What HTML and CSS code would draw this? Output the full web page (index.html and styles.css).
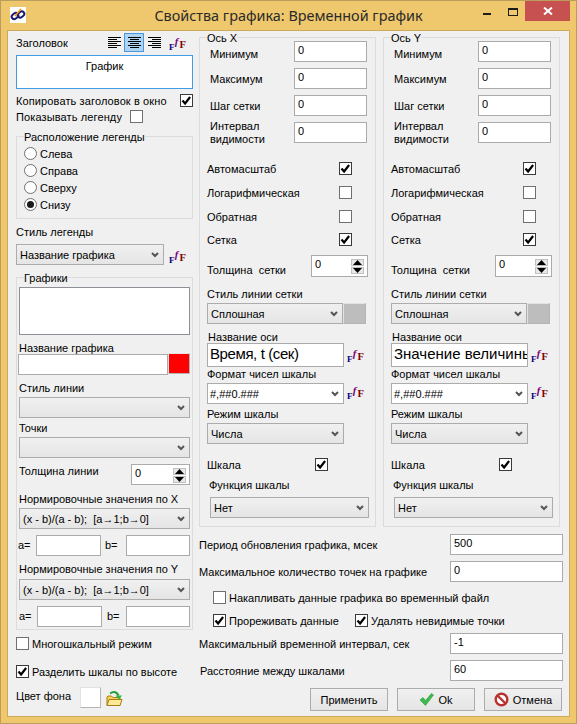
FILE: index.html
```html
<!DOCTYPE html>
<html lang="ru">
<head>
    <meta charset="UTF-8" />
    <title>Свойства графика</title>
    <link rel="stylesheet" href="styles.css">
</head>
<body>
<svg class="defs" width="0" height="0">
    <symbol id="chev" viewBox="0 0 8 6"><path d="M1 1l3 3 3-3" fill="none" stroke="#555" stroke-width="2"/></symbol>
    <symbol id="tick" viewBox="0 0 13 13"><path d="M2.5 6.5l2.6 3 5-6.5" fill="none" stroke="#000" stroke-width="2.2"/></symbol>
    <symbol id="up" viewBox="0 0 9 5"><path d="M4.5 0L9 5H0z" fill="#000"/></symbol>
    <symbol id="down" viewBox="0 0 9 5"><path d="M0 0h9L4.5 5z" fill="#000"/></symbol>
</svg>

<div class="window">
    <div class="titlebar">
        <div class="app-icon">
            <svg width="16" height="16" viewBox="0 0 16 16">
                <rect width="16" height="16" fill="#fff"/>
                <g fill="none" stroke="#1c1c6e" stroke-width="2">
                    <rect x="1.5" y="6.5" width="7" height="5" rx="2.5" transform="rotate(-40 5 9)"/>
                    <rect x="7.5" y="5" width="7" height="5" rx="2.5" transform="rotate(-40 11 7.5)"/>
                </g>
                <path d="M5 9l6-7" stroke="#f09a1a" stroke-width="1.6"/>
            </svg>
        </div>
        <div class="title">Свойства графика: Временной график</div>
        <div class="controls">
            <div class="ctl-min"></div>
            <div class="ctl-max"></div>
            <div class="ctl-close">
                <svg width="10" height="8" viewBox="0 0 10 8"><path d="M1 0.5l8 7M9 0.5l-8 7" stroke="#fff" stroke-width="2"/></svg>
            </div>
        </div>
    </div>

    <div class="client">
        <div class="left">
            <div class="head-row mt2">
                <span class="lbl">Заголовок</span>
                <div class="align-bar">
                    <div class="align-btn">
                        <svg width="13" height="11" viewBox="0 0 13 11"><path d="M0 .5h13M0 2.5h9M0 4.5h13M0 6.5h9M0 8.5h13M0 10.5h9" stroke="#000"/></svg>
                    </div>
                    <div class="align-btn on">
                        <svg width="13" height="11" viewBox="0 0 13 11"><path d="M0 .5h13M2 2.5h9M0 4.5h13M2 6.5h9M0 8.5h13M2 10.5h9" stroke="#000"/></svg>
                    </div>
                    <div class="align-btn">
                        <svg width="13" height="11" viewBox="0 0 13 11"><path d="M0 .5h13M4 2.5h9M0 4.5h13M4 6.5h9M0 8.5h13M4 10.5h9" stroke="#000"/></svg>
                    </div>
                    <span class="ff ml4"><b class="ff-a">F</b><i class="ff-b">f</i><b class="ff-c">F</b></span>
                </div>
            </div>
            <div class="caption-box mt3">График</div>

            <div class="check-row mt5 w177">
                <span class="lbl wide">Копировать заголовок в окно</span>
                <span class="cb on"><svg width="13" height="13"><use href="#tick"/></svg></span>
            </div>
            <div class="check-row mt3 w127">
                <span class="lbl wide">Показывать легенду</span>
                <span class="cb"></span>
            </div>

            <div class="group mt13 legend-pos">
                <div class="group-title">Расположение легенды</div>
                <div class="radio-row first"><span class="radio"></span><span class="lbl">Слева</span></div>
                <div class="radio-row"><span class="radio"></span><span class="lbl">Справа</span></div>
                <div class="radio-row"><span class="radio"></span><span class="lbl">Сверху</span></div>
                <div class="radio-row"><span class="radio on"></span><span class="lbl">Снизу</span></div>
            </div>

            <div class="lbl mt6">Стиль легенды</div>
            <div class="field-row mt5">
                <div class="select w148">Название графика<svg class="chev" width="8" height="6"><use href="#chev"/></svg></div>
                <span class="ff ml4 ff-low"><b class="ff-a">F</b><i class="ff-b">f</i><b class="ff-c">F</b></span>
            </div>

            <div class="group mt12 plots">
                <div class="group-title">Графики</div>
                <div class="listbox"></div>
                <div class="lbl mt6">Название графика</div>
                <div class="field-row name-row">
                    <div class="input name-input"></div>
                    <div class="swatch red"></div>
                </div>
                <div class="lbl mt6">Стиль линии</div>
                <div class="select mt2 w171"><svg class="chev" width="8" height="6"><use href="#chev"/></svg></div>
                <div class="lbl mt3">Точки</div>
                <div class="select mt2 w171"><svg class="chev" width="8" height="6"><use href="#chev"/></svg></div>
                <div class="value-row mt6 between">
                    <span class="lbl low">Толщина линии</span>
                    <div class="spin w59"><span>0</span>
                        <div class="spin-btns">
                            <span class="spin-btn"><svg width="9" height="5"><use href="#up"/></svg></span>
                            <span class="spin-btn"><svg width="9" height="5"><use href="#down"/></svg></span>
                        </div>
                    </div>
                </div>
                <div class="lbl mt7">Нормировочные значения по X</div>
                <div class="select mt2 w171">(x - b)/(a - b);&nbsp; [a→1;b→0]<svg class="chev" width="8" height="6"><use href="#chev"/></svg></div>
                <div class="value-row mt6 pair-x">
                    <span class="lbl a">a=</span>
                    <div class="input wa"></div>
                    <span class="lbl b">b=</span>
                    <div class="input wb"></div>
                </div>
                <div class="lbl mt6">Нормировочные значения по Y</div>
                <div class="select mt3 w171">(x - b)/(a - b);&nbsp; [a→1;b→0]<svg class="chev" width="8" height="6"><use href="#chev"/></svg></div>
                <div class="value-row mt6 pair-y">
                    <span class="lbl a">a=</span>
                    <div class="input wa"></div>
                    <span class="lbl b">b=</span>
                    <div class="input wb"></div>
                </div>
            </div>

            <div class="inline-check mt7"><span class="cb"></span><span class="lbl">Многошкальный режим</span></div>
            <div class="inline-check mt15"><span class="cb on"><svg width="13" height="13"><use href="#tick"/></svg></span><span class="lbl">Разделить шкалы по высоте</span></div>

            <div class="bg-row mt9">
                <span class="lbl bg-lbl">Цвет фона</span>
                <div class="swatch white"></div>
                <svg class="folder" width="17" height="16" viewBox="0 0 17 16">
                    <path d="M1 6V14.500H14V6.500H7L5.500 5H2z" fill="#f7d257" stroke="#a57d10"/>
                    <path d="M1 14.500L3 8.500H16L14 14.500z" fill="#ffe998" stroke="#a57d10"/>
                    <path d="M4 2.500C8 0 11 1 12.500 4.500" fill="none" stroke="#1f9e35" stroke-width="2"/>
                    <path d="M9.500 4.500H16L13 8.500z" fill="#2fb548"/>
                </svg>
            </div>
        </div>

        <div class="right">
            <div class="axes">
                <div class="group axis">
                    <div class="group-title tight">Ось X</div>
                    <div class="value-row"><span class="lbl ind low">Минимум</span><div class="input wv">0</div></div>
                    <div class="value-row mt6"><span class="lbl ind">Максимум</span><div class="input wv">0</div></div>
                    <div class="value-row mt6"><span class="lbl ind high">Шаг сетки</span><div class="input wv">0</div></div>
                    <div class="value-row mt6"><span class="lbl ind two">Интервал<br>видимости</span><div class="input wv">0</div></div>
                    <div class="check-row mt19 w145"><span class="lbl">Автомасштаб</span><span class="cb on"><svg width="13" height="13"><use href="#tick"/></svg></span></div>
                    <div class="check-row mt11 w145"><span class="lbl">Логарифмическая</span><span class="cb"></span></div>
                    <div class="check-row mt11 w145"><span class="lbl">Обратная</span><span class="cb"></span></div>
                    <div class="check-row mt10 w145"><span class="lbl">Сетка</span><span class="cb on"><svg width="13" height="13"><use href="#tick"/></svg></span></div>
                    <div class="value-row mt9 w161 between">
                        <span class="lbl low2">Толщина&nbsp; сетки</span>
                        <div class="spin w57"><span>0</span>
                            <div class="spin-btns">
                                <span class="spin-btn"><svg width="9" height="5"><use href="#up"/></svg></span>
                                <span class="spin-btn"><svg width="9" height="5"><use href="#down"/></svg></span>
                            </div>
                        </div>
                    </div>
                    <div class="lbl mt10">Стиль линии сетки</div>
                    <div class="field-row mt2">
                        <div class="select w136">Сплошная<svg class="chev" width="8" height="6"><use href="#chev"/></svg></div>
                        <div class="swatch grey"></div>
                    </div>
                    <div class="lbl mt6 ind1">Название оси</div>
                    <div class="field-row axis-name">
                        <div class="input big narrow w137">Время, t (сек)</div>
                        <span class="ff ml2"><b class="ff-a">F</b><i class="ff-b">f</i><b class="ff-c">F</b></span>
                    </div>
                    <div class="lbl">Формат чисел шкалы</div>
                    <div class="field-row mt2">
                        <div class="select combo w137">#,##0.###<svg class="chev" width="8" height="6"><use href="#chev"/></svg></div>
                        <span class="ff ml2"><b class="ff-a">F</b><i class="ff-b">f</i><b class="ff-c">F</b></span>
                    </div>
                    <div class="lbl mt3">Режим шкалы</div>
                    <div class="select mt2 w137">Числа<svg class="chev" width="8" height="6"><use href="#chev"/></svg></div>
                    <div class="check-row mt14 w121"><span class="lbl">Шкала</span><span class="cb on"><svg width="13" height="13"><use href="#tick"/></svg></span></div>
                    <div class="lbl mt7 ind2">Функция шкалы</div>
                    <div class="select mt5 func w159">Нет<svg class="chev" width="8" height="6"><use href="#chev"/></svg></div>
                </div>

                <div class="group axis">
                    <div class="group-title tight">Ось Y</div>
                    <div class="value-row"><span class="lbl ind low">Минимум</span><div class="input wv">0</div></div>
                    <div class="value-row mt6"><span class="lbl ind">Максимум</span><div class="input wv">0</div></div>
                    <div class="value-row mt6"><span class="lbl ind high">Шаг сетки</span><div class="input wv">0</div></div>
                    <div class="value-row mt6"><span class="lbl ind two">Интервал<br>видимости</span><div class="input wv">0</div></div>
                    <div class="check-row mt19 w145"><span class="lbl">Автомасштаб</span><span class="cb on"><svg width="13" height="13"><use href="#tick"/></svg></span></div>
                    <div class="check-row mt11 w145"><span class="lbl">Логарифмическая</span><span class="cb"></span></div>
                    <div class="check-row mt11 w145"><span class="lbl">Обратная</span><span class="cb"></span></div>
                    <div class="check-row mt10 w145"><span class="lbl">Сетка</span><span class="cb on"><svg width="13" height="13"><use href="#tick"/></svg></span></div>
                    <div class="value-row mt9 w161 between">
                        <span class="lbl low2">Толщина&nbsp; сетки</span>
                        <div class="spin w57"><span>0</span>
                            <div class="spin-btns">
                                <span class="spin-btn"><svg width="9" height="5"><use href="#up"/></svg></span>
                                <span class="spin-btn"><svg width="9" height="5"><use href="#down"/></svg></span>
                            </div>
                        </div>
                    </div>
                    <div class="lbl mt10">Стиль линии сетки</div>
                    <div class="field-row mt2">
                        <div class="select w136">Сплошная<svg class="chev" width="8" height="6"><use href="#chev"/></svg></div>
                        <div class="swatch grey"></div>
                    </div>
                    <div class="lbl mt6 ind1">Название оси</div>
                    <div class="field-row axis-name">
                        <div class="input big w137">Значение величины</div>
                        <span class="ff ml2"><b class="ff-a">F</b><i class="ff-b">f</i><b class="ff-c">F</b></span>
                    </div>
                    <div class="lbl">Формат чисел шкалы</div>
                    <div class="field-row mt2">
                        <div class="select combo w137">#,##0.###<svg class="chev" width="8" height="6"><use href="#chev"/></svg></div>
                        <span class="ff ml2"><b class="ff-a">F</b><i class="ff-b">f</i><b class="ff-c">F</b></span>
                    </div>
                    <div class="lbl mt3">Режим шкалы</div>
                    <div class="select mt2 w137">Числа<svg class="chev" width="8" height="6"><use href="#chev"/></svg></div>
                    <div class="check-row mt14 w121"><span class="lbl">Шкала</span><span class="cb on"><svg width="13" height="13"><use href="#tick"/></svg></span></div>
                    <div class="lbl mt7 ind2">Функция шкалы</div>
                    <div class="select mt5 func w159">Нет<svg class="chev" width="8" height="6"><use href="#chev"/></svg></div>
                </div>
            </div>

            <div class="value-row mt7 between"><span class="lbl">Период обновления графика, мсек</span><div class="input wl">500</div></div>
            <div class="value-row mt6 between"><span class="lbl">Максимальное количество точек на графике</span><div class="input wl">0</div></div>
            <div class="inline-check mt9 opt"><span class="cb"></span><span class="lbl">Накапливать данные графика во временный файл</span></div>
            <div class="opt-row mt10">
                <div class="inline-check thin"><span class="cb on"><svg width="13" height="13"><use href="#tick"/></svg></span><span class="lbl">Прореживать данные</span></div>
                <div class="inline-check"><span class="cb on"><svg width="13" height="13"><use href="#tick"/></svg></span><span class="lbl">Удалять невидимые точки</span></div>
            </div>
            <div class="value-row mt6 between"><span class="lbl">Максимальный временной интервал, сек</span><div class="input wl">-1</div></div>
            <div class="value-row mt6 between"><span class="lbl ind1">Расстояние между шкалами</span><div class="input wl">60</div></div>
            <div class="buttons mt7">
                <div class="btn">Применить</div>
                <div class="btn">
                    <svg width="15" height="13" viewBox="0 0 15 13"><path d="M1 7l3-2.500 2.500 3L12.500 0.500 14.500 2 6.500 12.500z" fill="#3dbb4c" stroke="#2c9a3a" stroke-width=".6"/></svg>
                    Ok
                </div>
                <div class="btn">
                    <svg width="15" height="15" viewBox="0 0 15 15"><circle cx="7.500" cy="7.500" r="5.800" fill="#fff" stroke="#b8322e" stroke-width="2.400"/><path d="M3.500 3.500l8 8" stroke="#b8322e" stroke-width="2.400"/></svg>
                    Отмена
                </div>
            </div>
        </div>
    </div>
</div>
</body>
</html>
```

FILE: styles.css
```css
* {
    box-sizing: border-box;
}
html, body {
    margin: 0;
    padding: 0;
}
body {
    width: 577px;
    height: 724px;
    overflow: hidden;
    font-family: "Liberation Sans", Arial, sans-serif;
    font-size: 11px;
    line-height: 14px;
    color: #000;
}
.defs {
    display: block;
    height: 0;
}

/* the F f F font button */
.ff {
    width: 18px;
    height: 15px;
    flex: none;
    display: flex;
    align-items: flex-start;
    font-family: "Liberation Serif", serif;
    line-height: 10px;
    font-weight: bold;
}
.ff-a {
    width: 6px;
    margin: 6px 0 0 1px;
    font-size: 9px;
    color: #00007f;
}
.ff-b {
    width: 5px;
    font-size: 11px;
    color: #7f007f;
}
.ff-c {
    font-size: 10.5px;
    margin-top: 4px;
    color: #7f0000;
}

.window {
    width: 577px;
    height: 724px;
    background: #efc76d;
    border: 1px solid #b99e5c;
    display: flex;
    flex-direction: column;
}
.titlebar {
    height: 29px;
    display: grid;
    grid-template-columns: 1fr auto 1fr;
    color: #2a2a2a;
}
.app-icon {
    padding: 6px 0 0 9px;
}
.title {
    font-family: "Noto Sans", sans-serif;
    font-size: 14.4px;
    line-height: 20px;
    padding-top: 5px;
}
.controls {
    display: flex;
    justify-content: flex-end;
    padding-right: 6px;
}
.ctl-min {
    width: 8px;
    height: 2px;
    margin: 12px 17px 0 0;
    background: #1d1d1d;
}
.ctl-max {
    width: 10px;
    height: 8px;
    margin: 7px 7px 0 0;
    border: 1px solid #1d1d1d;
    border-top-width: 2px;
}
.ctl-close {
    width: 45px;
    height: 20px;
    background: #c75050;
    display: flex;
    align-items: center;
    justify-content: center;
}

.client {
    width: 563px;
    height: 687px;
    margin-left: 6px;
    border: 1px solid #cfa95a;
    background: #f0f0f0;
    padding-left: 8px;
    display: grid;
    grid-template-columns: 177px 364px;
    column-gap: 6px;
    align-content: start;
}

.lbl {
    display: block;
    height: 14px;
    white-space: nowrap;
}
.wide {
    letter-spacing: 0.12px;
}
.low {
    padding-top: 4px;
    height: 18px;
}
.low2 {
    padding-top: 8px;
    height: 22px;
}
.high {
    padding-top: 0;
}
.two {
    height: 26px;
    margin: -2px 0 -3px;
    line-height: 13px;
}
.ind {
    margin-left: 3px;
}
.ind1 {
    margin-left: 1px;
}
.ind2 {
    margin-left: 2px;
}

.mt2 { margin-top: 2px; }
.mt3 { margin-top: 3px; }
.mt4 { margin-top: 4px; }
.mt5 { margin-top: 5px; }
.mt6 { margin-top: 6px; }
.mt7 { margin-top: 7px; }
.mt8 { margin-top: 8px; }
.mt9 { margin-top: 9px; }
.mt10 { margin-top: 10px; }
.mt11 { margin-top: 11px; }
.mt12 { margin-top: 12px; }
.mt13 { margin-top: 13px; }
.mt14 { margin-top: 14px; }
.mt15 { margin-top: 15px; }
.mt19 { margin-top: 19px; }
.ml2 { margin-left: 2px; }
.ml4 { margin-left: 4px; }

.w121 { width: 121px; }
.w127 { width: 127px; }
.w136 { width: 136px; }
.w137 { width: 137px; }
.w145 { width: 145px; }
.w148 { width: 148px; }
.w159 { width: 159px; }
.w161 { width: 161px; }
.w171 { width: 171px; }
.w177 { width: 177px; }
.w57 { width: 57px; }
.w59 { width: 59px; }
.wv { width: 73px; }
.wl { width: 113px; }
.wa { width: 65px; }
.wb { width: 64px; }

/* header row with alignment buttons */
.head-row {
    height: 19px;
    display: flex;
    align-items: center;
    justify-content: space-between;
}
.head-row .lbl {
    margin-top: 1px;
}
.align-bar {
    display: flex;
    align-items: center;
    padding-right: 7px;
}
.align-btn {
    width: 20px;
    height: 19px;
    display: flex;
    align-items: center;
    justify-content: center;
}
.align-btn.on {
    background: #aed4f5;
    border: 1px solid #4c97d9;
}
.head-row .ff {
    margin-top: 2px;
}
.ff-low {
    margin-bottom: 1px;
}
.caption-box {
    height: 34px;
    background: #fff;
    border: 1px solid #3f9ce8;
    text-align: center;
    padding-top: 3px;
}

/* check boxes */
.check-row {
    height: 13px;
    display: flex;
    align-items: center;
    justify-content: space-between;
}
.cb {
    width: 13px;
    height: 13px;
    flex: none;
    display: block;
    background: #fff;
    border: 1px solid #707070;
}
.cb.on {
    border-color: #3a3a3a;
}
.cb svg {
    display: block;
    margin: -1px 0 0 -1px;
}
.inline-check {
    height: 13px;
    display: flex;
    align-items: center;
    gap: 3px;
}

/* group frames */
.group {
    border: 1px solid #dcdcdc;
}
.group-title {
    width: fit-content;
    height: 14px;
    margin: -7px 0 3px 7px;
    background: #f0f0f0;
    white-space: nowrap;
}
.group-title.tight {
    margin: -7px 0 -4px 0;
}
.legend-pos {
    height: 83px;
}
.radio-row {
    height: 13px;
    margin: 4px 0 0 7px;
    display: flex;
    align-items: center;
    gap: 3px;
}
.radio-row.first {
    margin-top: 0;
}
.radio {
    width: 13px;
    height: 13px;
    border-radius: 50%;
    background: #fff;
    border: 1px solid #707070;
    display: flex;
    align-items: center;
    justify-content: center;
}
.radio.on::after {
    content: "";
    width: 7px;
    height: 7px;
    border-radius: 50%;
    background: #1a1a1a;
}
.plots {
    height: 353px;
    padding: 0 2px;
}
.plots .group-title {
    margin: -7px 0 2px 5px;
}
.listbox {
    height: 48px;
    background: #fff;
    border: 1px solid #8f8f98;
}
.axis {
    width: 177px;
    height: 490px;
    padding-left: 7px;
}
.axes {
    display: flex;
    gap: 7px;
    margin-top: 6px;
}

/* fields */
.field-row {
    display: flex;
    align-items: flex-end;
}
.axis .field-row .ff {
    margin-bottom: 4px;
}
.value-row {
    min-height: 21px;
    display: flex;
    align-items: center;
}
.axis .value-row .lbl.ind {
    width: 84px;
}
.between {
    justify-content: space-between;
    align-items: flex-start;
}
.between .lbl {
    padding-top: 4px;
    height: 18px;
}
.between .lbl.low2 {
    padding-top: 8px;
    height: 22px;
}
.plots .between .lbl {
    padding-top: 0;
    margin-top: 0;
}
.input {
    height: 21px;
    background: #fff;
    border: 1px solid #ababab;
    padding: 1px 0 0 3px;
    flex: none;
    overflow: hidden;
    white-space: nowrap;
}
.input.big {
    height: 24px;
    font-size: 15px;
    line-height: 20px;
    padding: 0 0 0 2px;
}
.input.narrow {
    letter-spacing: -0.4px;
}
.axis-name {
    margin-top: -1px;
    height: 24px;
}
.select {
    height: 21px;
    padding-left: 3px;
    border: 1px solid #acacac;
    background: linear-gradient(#f0f0f0, #e5e5e5);
    display: flex;
    align-items: center;
    justify-content: space-between;
    white-space: nowrap;
    flex: none;
}
.select.combo {
    background: #fff;
    padding-left: 2px;
}
.select.func {
    margin-left: 3px;
}
.chev {
    flex: none;
    margin: 0 4px 0 auto;
}
.swatch {
    flex: none;
    border: 1px solid;
    border-color: #e3e3e3 #b4b4b4 #b4b4b4 #e3e3e3;
}
.swatch.red {
    width: 22px;
    height: 21px;
    margin-top: -1px;
    background: #f00;
}
.swatch.grey {
    width: 23px;
    height: 21px;
    background: #bdbdbd;
}
.swatch.white {
    width: 21px;
    height: 21px;
    background: #fff;
}
.name-row {
    margin: -1px 0 0 -1px;
    align-items: flex-start;
}
.name-input {
    width: 150px;
}
.spin {
    height: 21px;
    background: #fff;
    border: 1px solid #ababab;
    padding: 1px 3px 0 3px;
    display: flex;
    justify-content: space-between;
    flex: none;
}
.axis .spin {
    height: 22px;
}
.spin-btns {
    display: flex;
    flex-direction: column;
    gap: 1px;
    padding-top: 2px;
}
.spin-btn {
    width: 13px;
    height: 7px;
    background: #e8e8e8;
    border: 1px solid #c0c0c0;
    display: flex;
    align-items: center;
    justify-content: center;
}
.pair-x .a {
    width: 18px;
    margin-left: -1px;
}
.pair-x .b {
    width: 21px;
    margin-left: 4px;
}
.pair-y .a {
    width: 18px;
}
.pair-y .b {
    width: 19px;
    margin-left: 5px;
}
.pair-x .lbl, .pair-y .lbl {
    margin-bottom: 2px;
}

/* background colour row */
.bg-row {
    display: flex;
    height: 21px;
    align-items: center;
}
.bg-lbl {
    width: 64px;
    margin-bottom: 3px;
}
.folder {
    margin: 2px 0 0 5px;
}

/* bottom options */
.opt {
    margin-left: 14px;
}
.opt-row {
    height: 13px;
    display: flex;
    margin-left: 14px;
}
.thin {
    width: 142px;
}
.buttons {
    display: flex;
    justify-content: flex-end;
    gap: 9px;
    padding-right: 1px;
}
.btn {
    width: 78px;
    height: 23px;
    border: 1px solid #acacac;
    background: linear-gradient(#f0f0f0, #e5e5e5);
    display: flex;
    align-items: center;
    justify-content: center;
    gap: 4px;
}
```
